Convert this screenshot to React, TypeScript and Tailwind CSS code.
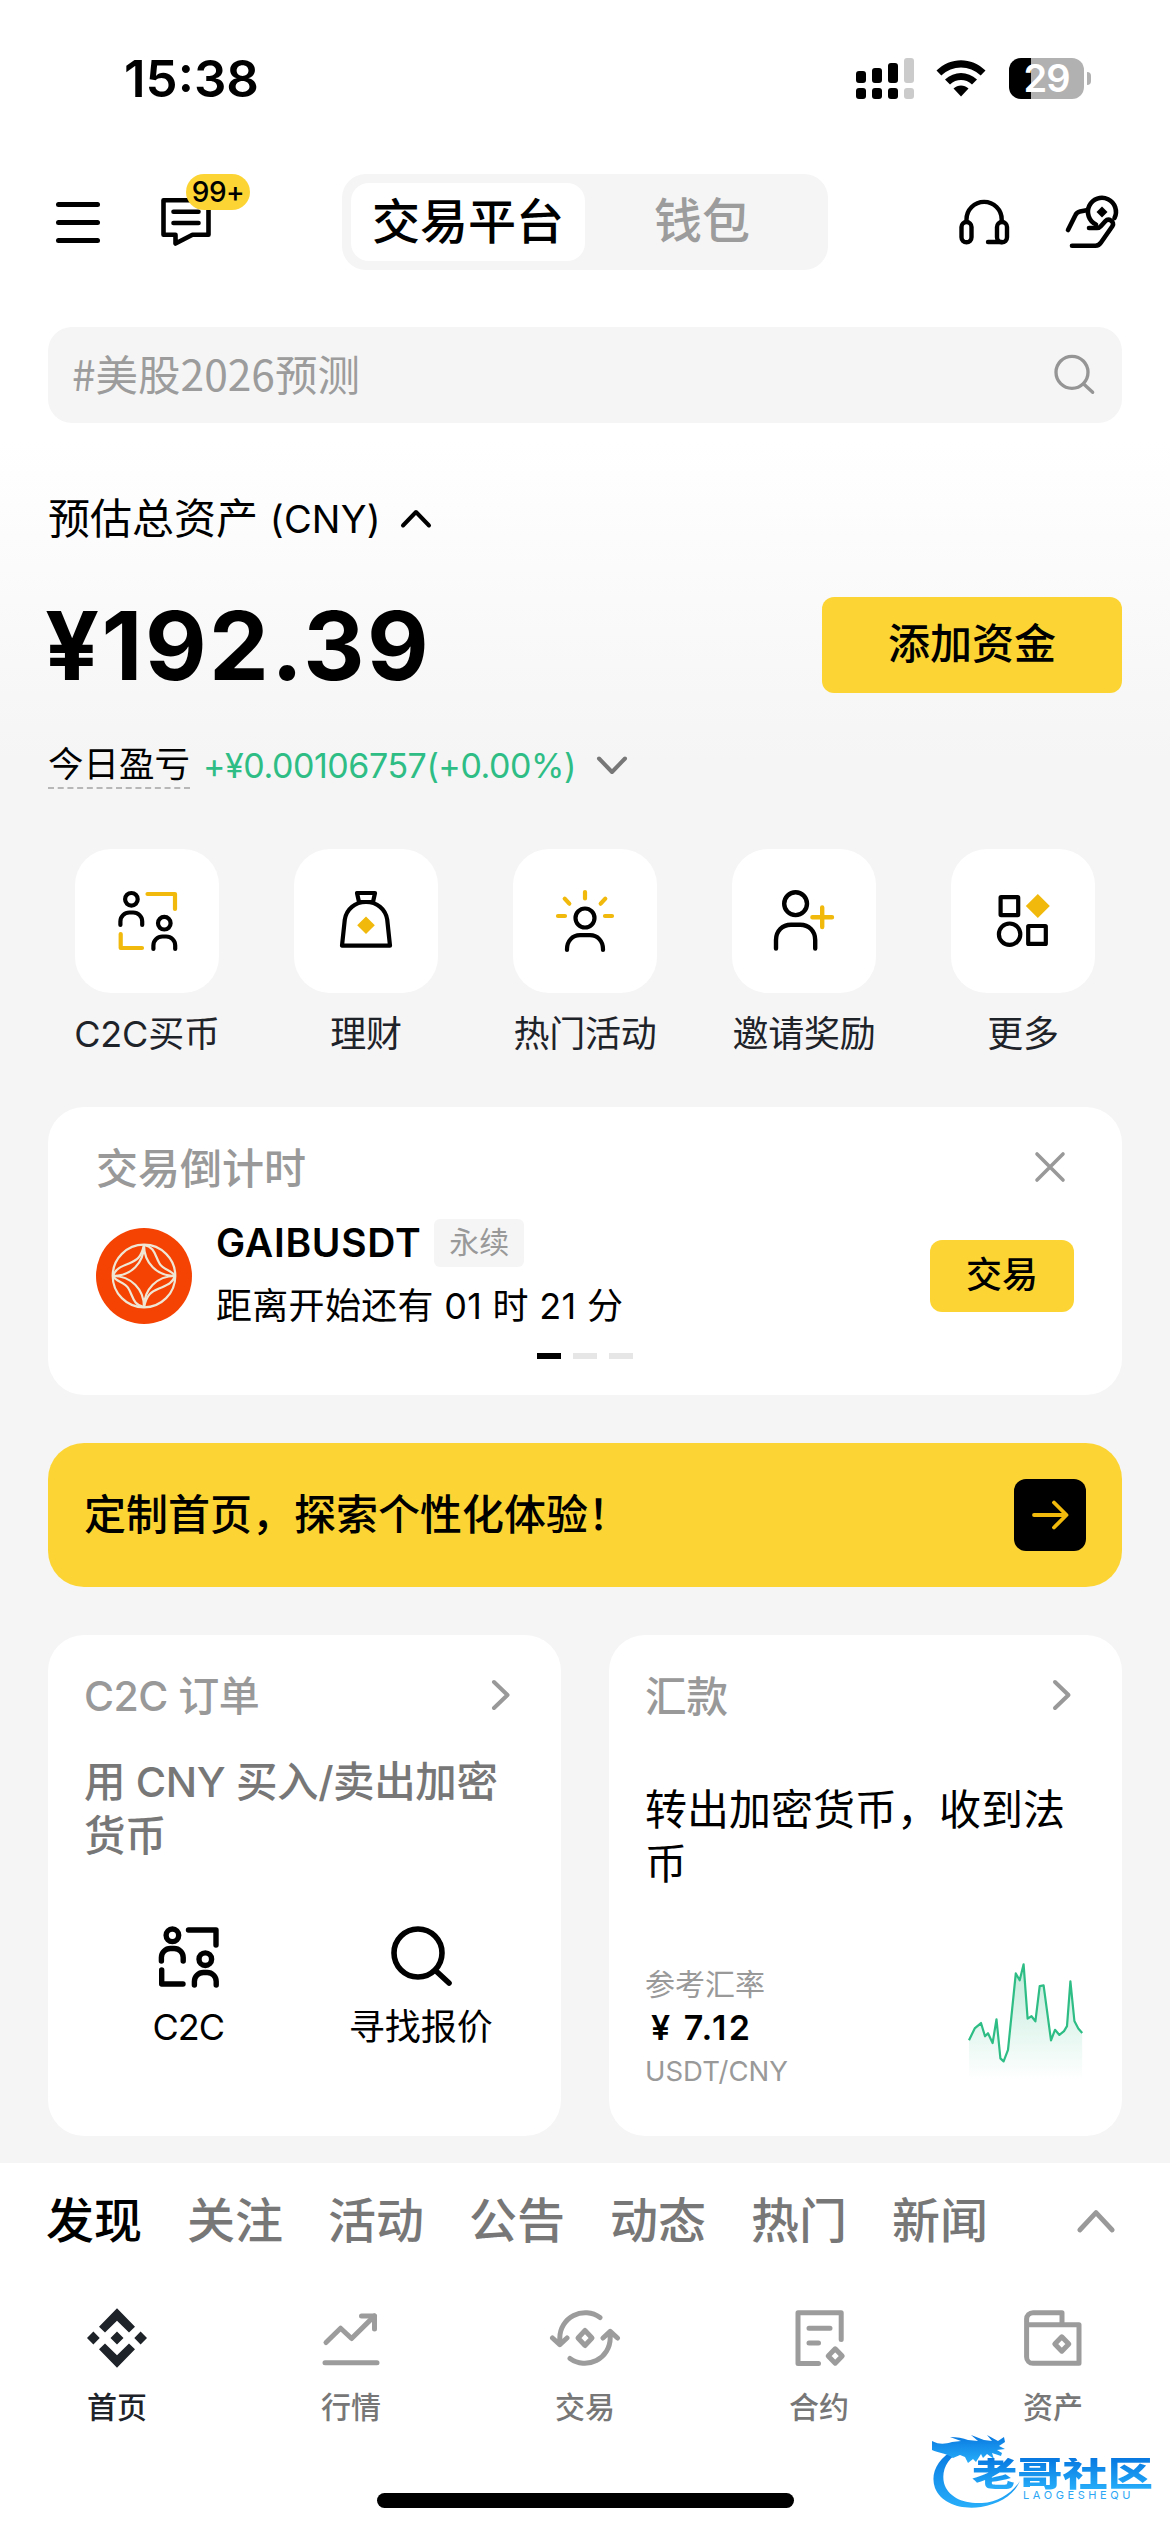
import type { ReactNode } from 'react';

interface IconProps {
  className?: string;
}

const quickActions: { label: string; icon: ReactNode }[] = [
  { label: 'C2C买币', icon: <C2CIcon className="w-[72px] h-[72px] stroke-[4.2]" accent="#f0b90b" /> },
  { label: '理财', icon: <EarnIcon /> },
  { label: '热门活动', icon: <CampaignIcon /> },
  { label: '邀请奖励', icon: <InviteIcon /> },
  { label: '更多', icon: <MoreIcon /> }
];

const feedTabs = ['发现', '关注', '活动', '公告', '动态', '热门', '新闻'];

const navItems: { label: string; icon: ReactNode }[] = [
  { label: '首页', icon: <HomeIcon /> },
  { label: '行情', icon: <MarketsIcon /> },
  { label: '交易', icon: <TradeIcon /> },
  { label: '合约', icon: <FuturesIcon /> },
  { label: '资产', icon: <WalletIcon /> }
];

const ratePoints = [
  [0, 76], [5.7, 64.3], [12, 59], [16, 72], [19, 69], [23.6, 78.7], [27.5, 55.3], [31.4, 93.7], [34.6, 96.7],
  [39, 85.3], [46.8, 10.3], [50.7, 17], [54.6, 1.3], [58.6, 54.7], [62.5, 52.3], [66.4, 57.3], [70.7, 22.7],
  [74.6, 22], [82, 76], [86, 65.7], [90.4, 70.7], [95, 67], [98, 62], [101.4, 18], [105.4, 57], [109.3, 64.3],
  [113.2, 68.7]
];

function C2CIcon({ className = '', accent = '#000' }: IconProps & { accent?: string }) {
  return (
    <svg viewBox="36 36 72 72" fill="none" stroke="#000" strokeLinecap="round" strokeLinejoin="round" className={className}>
      <circle cx="56.4" cy="50.3" r="6.3" />
      <path d="M45.4 76v-3.5a9 9 0 0 1 9-9h3.8a9 9 0 0 1 9 9V76" />
      <circle cx="89.3" cy="74.2" r="6.3" />
      <path d="M78.4 100v-3.5a9 9 0 0 1 9-9h3.8a9 9 0 0 1 9 9v3.5" />
      <path d="M72.5 45H100v15M45.7 85v14H67" stroke={accent} />
    </svg>
  );
}

function EarnIcon() {
  return (
    <svg viewBox="36 36 72 72" fill="none" stroke="#000" strokeWidth="4.2" strokeLinejoin="round" className="w-[72px] h-[72px]">
      <path d="M63 44h18l-2 9H65z" />
      <path d="M72 53c-11 0-19.5 7-21.2 17.5L48 96.7h48l-2.8-26.2C91.5 60 83 53 72 53z" />
      <path d="M72 67.5l8.8 8.8-8.8 8.8-8.8-8.8z" fill="#f0b90b" stroke="none" />
    </svg>
  );
}

function CampaignIcon() {
  return (
    <svg viewBox="36 36 72 72" fill="none" stroke="#000" strokeWidth="4.2" strokeLinecap="round" className="w-[72px] h-[72px]">
      <circle cx="72" cy="69" r="9.5" />
      <path d="M54 101v-1c0-8 5.5-13.8 13-13.8h10c7.5 0 13 5.8 13 13.8v1" />
      <path d="M72 43v6.5M51.7 49.7l4.6 5M92.3 49.7l-4.6 5M45 67h7M92 67h7" stroke="#f0b90b" />
    </svg>
  );
}

function InviteIcon() {
  return (
    <svg viewBox="36 36 72 72" fill="none" stroke="#000" strokeWidth="4.4" strokeLinecap="round" className="w-[72px] h-[72px]">
      <circle cx="63.6" cy="54.7" r="11.4" />
      <path d="M44 99.5V91c0-9 6.3-15.3 15-15.3h9.2c8.7 0 15 6.3 15 15.3v8.5" />
      <path d="M90.2 58.5v19.6M80.4 68.3H100" stroke="#f0b90b" />
    </svg>
  );
}

function MoreIcon() {
  return (
    <svg viewBox="36 36 72 72" fill="none" stroke="#000" strokeWidth="4.2" strokeLinejoin="round" className="w-[72px] h-[72px]">
      <rect x="49.6" y="48.2" width="17.6" height="17.9" rx="0.5" />
      <rect x="77.2" y="77" width="17.6" height="17.9" rx="0.5" />
      <circle cx="58.6" cy="85.2" r="10.7" />
      <path d="M86.8 45l12 12-12 12-12-12z" fill="#f0b90b" stroke="none" />
    </svg>
  );
}

function MessageIcon() {
  return (
    <svg viewBox="0 0 72 72" fill="none" stroke="#000" strokeWidth="4.6" strokeLinecap="round" strokeLinejoin="round" className="w-[72px] h-[72px]">
      <path d="M13.5 14.2h45v34.6H42.5L25.5 57.5v-8.7h-12z" />
      <path d="M23.5 25.7h25M23.5 37h25" />
    </svg>
  );
}

function HeadsetIcon() {
  return (
    <svg viewBox="0 0 72 72" fill="none" stroke="#000" strokeWidth="4.4" strokeLinecap="round" className="w-[72px] h-[72px]">
      <path d="M18.5 35v-1.5a17.6 17.6 0 0 1 35.2 0V35" />
      <rect x="13.5" y="36" width="10" height="20.3" rx="5" />
      <rect x="49" y="36" width="10" height="20.3" rx="5" />
      <path d="M40 56h14" />
    </svg>
  );
}

function HandCoinIcon() {
  return (
    <svg viewBox="0 0 72 72" fill="none" stroke="#000" strokeWidth="4.6" strokeLinecap="round" strokeLinejoin="round" className="w-[72px] h-[72px]">
      <path d="M40 38.5A14 14 0 1 1 58.5 32" />
      <path d="M46 20.5l5.5 5.5-5.5 5.5-5.5-5.5z" fill="#000" stroke="none" />
      <path d="M12 44l7.5-15c1-2.2 2.5-3.2 4.5-3.6l6.5-1.2" />
      <path d="M33 42h8c2 0 3-.8 4-2l4.5-5c3-3.2 9.5.5 7 5L45 56.5c-1.5 2.4-3 3.2-5.5 3.2H16" />
    </svg>
  );
}

function SearchIcon({ className = '' }: IconProps) {
  return (
    <svg viewBox="0 0 72 72" fill="none" stroke="currentColor" strokeLinecap="round" className={className}>
      <circle cx="33" cy="32" r="24" />
      <path d="M50.5 49.5L64 62" />
    </svg>
  );
}

function HomeIcon() {
  return (
    <svg viewBox="0 0 72 72" fill="currentColor" className="w-[72px] h-[72px]">
      <path d="M36 6.3L54 24.7l-6 5.8-12-11.8-12 11.8-6-5.8z" />
      <path d="M36 65.7L18 47.3l6-5.8 12 11.8 12-11.8 6 5.8z" />
      <path d="M12.4 29.5l6.3 6.5-6.3 6.5L6 36zM59.6 29.5L66 36l-6.4 6.5-6.3-6.5zM36 29.5l6.5 6.5-6.5 6.5-6.5-6.5z" />
    </svg>
  );
}

function MarketsIcon() {
  return (
    <svg viewBox="0 0 72 72" fill="none" stroke="#9c9c9c" strokeWidth="5" strokeLinecap="round" strokeLinejoin="round" className="w-[72px] h-[72px]">
      <path d="M11 40.5l14.6-14.3 11 10.3L59.5 13.9" />
      <path d="M46.5 13.9h13V27M10 60.7h52" />
    </svg>
  );
}

function TradeIcon() {
  return (
    <svg viewBox="0 0 72 72" fill="none" stroke="#9c9c9c" strokeWidth="5" strokeLinecap="round" strokeLinejoin="round" className="w-[72px] h-[72px]">
      <path d="M10.8 42.5V36A25.3 25.3 0 0 1 51 15.6M3.5 36l7.3 6.7L18 36" />
      <path d="M61.2 29.5V36A25.3 25.3 0 0 1 21 56.4M54 36l7.2-6.7 7.3 6.7" />
      <path d="M36 28.5l7 7.5-7 7.5-7-7.5z" />
    </svg>
  );
}

function FuturesIcon() {
  return (
    <svg viewBox="0 0 72 72" fill="none" stroke="#9c9c9c" strokeWidth="5" strokeLinecap="round" strokeLinejoin="round" className="w-[72px] h-[72px]">
      <path d="M58.2 37.5V10.7H15v50.8h20.5" />
      <path d="M26 26.3h21M26 41h9.5" />
      <path d="M52.2 46.8l7 7.2-7 7.2-7-7.2z" />
    </svg>
  );
}

function WalletIcon() {
  return (
    <svg viewBox="0 0 72 72" fill="none" stroke="#9c9c9c" strokeWidth="5" strokeLinecap="round" strokeLinejoin="round" className="w-[72px] h-[72px]">
      <path d="M9.6 22.7H62v38.6H16a6.4 6.4 0 0 1-6.4-6.4V17.1a6.4 6.4 0 0 1 6.4-6.4h29v12" />
      <path d="M44.8 34.8l7 7.2-7 7.2-7-7.2z" />
    </svg>
  );
}

function GaibLogo() {
  return (
    <svg viewBox="0 0 96 96" fill="none" stroke="#efe6d3" strokeWidth="2.2" className="w-24 h-24 shrink-0">
      <circle cx="48" cy="48" r="48" fill="#f54304" stroke="none" />
      <circle cx="48" cy="48" r="31.3" />
      <path d="M48 17c0 18-13 31-31 31 18 0 31 13 31 31 0-18 13-31 31-31-18 0-31-13-31-31z" />
      <path d="M48 17c-3 13-7 15-15 18.5C25 39 20 40 17 48M48 17c11 2 11 11 15.5 18.5C67 42 76 42 79 48" />
      <path d="M48 79c3-13 7-15 15-18.5C71 57 76 56 79 48M48 79c-11-2-11-11-15.5-18.5C29 54 20 54 17 48" />
    </svg>
  );
}

function Chevron({ d, className = '' }: { d: string; className?: string }) {
  return (
    <svg viewBox="0 0 40 40" fill="none" stroke="currentColor" strokeLinecap="round" strokeLinejoin="round" className={className}>
      <path d={d} />
    </svg>
  );
}

function StatusBar() {
  return (
    <div className="h-[156px] flex items-center justify-between pl-[124px] pr-[79px]">
      <span className="text-[51px] font-semibold leading-none">15:38</span>
      <div className="flex items-center">
        <svg viewBox="0 0 58 41" className="w-[58px] h-[41px]">
          <path d="M3 13h4a3 3 0 0 1 3 3v6a3 3 0 0 1-3 3H3a3 3 0 0 1-3-3v-6a3 3 0 0 1 3-3zM19 10h4a3 3 0 0 1 3 3v9a3 3 0 0 1-3 3h-4a3 3 0 0 1-3-3v-9a3 3 0 0 1 3-3zM35 5h4a3 3 0 0 1 3 3v14a3 3 0 0 1-3 3h-4a3 3 0 0 1-3-3V8a3 3 0 0 1 3-3z" />
          <rect x="0" y="30" width="10" height="11" rx="3" />
          <rect x="16" y="30" width="10" height="11" rx="3" />
          <rect x="32" y="30" width="10" height="11" rx="3" />
          <rect x="48" y="0" width="10" height="25" rx="3" fill="#cbcbcb" />
          <rect x="48" y="30" width="10" height="11" rx="3" fill="#cbcbcb" />
        </svg>
        <svg viewBox="0 0 50 37" className="w-[50px] h-[37px] ml-[22px]">
          <path d="M0.5 10.5C14.5-3.3 35.5-3.3 49.5 10.5l-4.8 5C33.5 4.8 16.5 4.8 5.3 15.5z" />
          <path d="M9 19.5c9.2-8.8 22.8-8.8 32 0l-5 5c-6.3-5.9-15.7-5.9-22 0z" />
          <path d="M17.5 28.5c4.3-3.9 10.7-3.9 15 0L25 36.5z" />
        </svg>
        <div className="ml-[23px] w-[75px] h-[41px] rounded-[12px] bg-[linear-gradient(90deg,#000_30%,#b1b1b1_30%)] text-white text-[38px] font-semibold leading-[41px] text-center tracking-[-1px]">
          29
        </div>
        <div className="ml-[3px] w-1 h-[13px] rounded-r-full bg-[#b1b1b1]" />
      </div>
    </div>
  );
}

function Header() {
  return (
    <div className="mt-[18px] h-24 flex items-center pl-14 pr-[42px]">
      <div className="flex items-center w-[286px]">
        <div className="w-11 flex flex-col gap-[13px]">
          <div className="h-[5px] rounded-full bg-black" />
          <div className="h-[5px] rounded-full bg-black" />
          <div className="h-[5px] rounded-full bg-black" />
        </div>
        <div className="relative ml-[50px]">
          <MessageIcon />
          <span className="absolute left-9 -top-3 w-16 h-9 rounded-full bg-[#fcd535] text-[28px] font-medium leading-9 text-center tracking-[-0.5px]">99+</span>
        </div>
      </div>
      <div className="w-[486px] h-24 rounded-[24px] bg-[#f5f5f5] p-[9px] flex text-[48px] font-medium">
        <div className="w-[234px] rounded-[18px] bg-white flex items-center justify-center leading-none">交易平台</div>
        <div className="flex-1 flex items-center justify-center leading-none pb-0.5 text-[#9c9c9c]">钱包</div>
      </div>
      <div className="flex gap-9 ml-auto">
        <HeadsetIcon />
        <HandCoinIcon />
      </div>
    </div>
  );
}

function Balance() {
  return (
    <div className="px-12 pt-[71px] bg-[linear-gradient(180deg,#fff_5%,#f5f5f5_92%)]">
      <div className="h-12 mt-[1px] flex items-center text-[42px] leading-none">
        预估总资产&nbsp;<span className="text-[38px] tracking-[0.2px]">(CNY)</span>
        <Chevron d="M7 26.5L20 13l13 13.5" className="ml-[15px] w-10 h-10 stroke-[4]" />
      </div>
      <div className="mt-[54px] flex items-center justify-between h-24">
        <span className="-ml-[3px] text-[95px] font-bold leading-none tracking-[2.4px]">¥192.39</span>
        <button className="w-[300px] h-24 rounded-[12px] bg-[#fcd535] text-[42px] font-medium leading-none pb-0.5">添加资金</button>
      </div>
      <div className="mt-12 h-12 flex items-center">
        <span className="h-12 text-[35.5px] leading-[47px] border-b-2 border-dashed border-[#b7b7b7]">今日盈亏</span>
        <span className="ml-[13px] pt-0.5 text-[34px] leading-none tracking-[-0.45px] text-[#2ebd85]">+¥0.00106757(+0.00%)</span>
        <Chevron d="M7 13.5L20 27l13-13.5" className="ml-4 w-10 h-10 stroke-[4] text-[#777]" />
      </div>
    </div>
  );
}

function CountdownCard() {
  return (
    <div className="mt-[49px] h-72 rounded-[36px] bg-white px-12 flex flex-col">
      <div className="mt-9 h-12 flex items-center justify-between text-[#999]">
        <span className="pt-[3px] text-[42px] font-medium leading-none">交易倒计时</span>
        <svg viewBox="0 0 48 48" fill="none" stroke="currentColor" strokeWidth="3.6" strokeLinecap="round" className="w-12 h-12">
          <path d="M11 11l26 26M37 11L11 37" />
        </svg>
      </div>
      <div className="mt-7 h-[114px] flex items-center">
        <GaibLogo />
        <div className="ml-6 flex-1">
          <div className="flex items-center h-12">
            <span className="pb-0.5 text-[39px] font-semibold leading-none tracking-[0.7px]">GAIBUSDT</span>
            <span className="ml-[13px] w-[90px] h-12 rounded-[6px] bg-[#f5f5f5] text-[30px] leading-[47px] text-center text-[#999]">永续</span>
          </div>
          <div className="mt-3.5 h-[52px] text-[36px] leading-[51px] tracking-[0.3px]">距离开始还有 01 时 21 分</div>
        </div>
        <button className="w-36 h-[72px] rounded-[12px] bg-[#fcd535] text-[36px] font-medium leading-none pb-0.5">交易</button>
      </div>
      <div className="mt-5 flex justify-center gap-3">
        <div className="w-6 h-1.5 bg-black" />
        <div className="w-6 h-1.5 bg-[#e6e6e6]" />
        <div className="w-6 h-1.5 bg-[#e6e6e6]" />
      </div>
    </div>
  );
}

function RateChart() {
  const line = ratePoints.map(([x, y], i) => `${i ? 'L' : 'M'}${x} ${y}`).join('');
  return (
    <svg viewBox="0 0 114 115" preserveAspectRatio="none" className="w-[114px] h-[117px] overflow-visible">
      <defs>
        <linearGradient id="rate-fill" x1="0" y1="0" x2="0" y2="1">
          <stop offset="0" stopColor="#2ebd85" stopOpacity="0.3" />
          <stop offset="1" stopColor="#2ebd85" stopOpacity="0" />
        </linearGradient>
      </defs>
      <path d={`${line}V115H0Z`} fill="url(#rate-fill)" />
      <path d={line} fill="none" stroke="#2ebd85" strokeWidth="2.2" strokeLinejoin="round" />
    </svg>
  );
}

function Cards() {
  return (
    <div className="mt-12 flex gap-12 h-[501px]">
      <div className="w-[513px] rounded-[36px] bg-white pt-9">
        <div className="pl-9 pr-10 h-12 flex items-center justify-between text-[#999]">
          <span className="pt-0.5 text-[41px] font-medium leading-none tracking-[-0.5px]">C2C 订单</span>
          <Chevron d="M13 7l13.5 13L13 33" className="w-10 h-10 stroke-[4]" />
        </div>
        <p className="mt-9 px-9 text-[41.5px] font-medium leading-[54px] tracking-[-0.4px] whitespace-nowrap text-[#777]">
          用 CNY 买入/卖出加密
          <br />
          货币
        </p>
        <div className="mt-[58px] px-6 flex text-[36px] leading-[48px] text-center">
          <div className="flex-1 flex flex-col items-center">
            <C2CIcon className="w-[72px] h-[72px] stroke-[5.4]" />
            <span className="mt-2.5 tracking-[-1px]">C2C</span>
          </div>
          <div className="flex-1 flex flex-col items-center">
            <SearchIcon className="w-[72px] h-[72px] stroke-[5.6]" />
            <span className="mt-2.5">寻找报价</span>
          </div>
        </div>
      </div>
      <div className="w-[513px] rounded-[36px] bg-white pt-9">
        <div className="pl-9 pr-10 h-12 flex items-center justify-between text-[#999]">
          <span className="pt-[3px] text-[41.5px] font-medium leading-[52px]">汇款</span>
          <Chevron d="M13 7l13.5 13L13 33" className="w-10 h-10 stroke-[4]" />
        </div>
        <p className="mt-16 px-9 text-[42px] leading-[54px]">
          转出加密货币，收到法
          <br />
          币
        </p>
        <div className="mt-[66px] px-9 flex justify-between">
          <div className="pt-[5px] text-[#999]">
            <div className="text-[30px] leading-[44px]">参考汇率</div>
            <div className="pl-1.5 h-[44px] text-[34px] font-semibold leading-[44px] tracking-[2.5px] text-black">¥ 7.12</div>
            <div className="h-10 text-[27.5px] leading-[43px]">USDT/CNY</div>
          </div>
          <div className="pr-[3px] pt-1.5">
            <RateChart />
          </div>
        </div>
      </div>
    </div>
  );
}

function Watermark() {
  return (
    <div className="absolute left-[931px] top-[2431px] w-[222px] h-[78px]">
      <svg viewBox="0 0 222 78" className="w-[222px] h-[78px]">
        <defs>
          <linearGradient id="mark" x1="0" y1="0" x2="0" y2="1">
            <stop offset="0" stopColor="#0878e0" />
            <stop offset="1" stopColor="#27aefa" />
          </linearGradient>
        </defs>
        <g fill="url(#mark)">
          <path d="M24 18C6 28-1 43 4 57c6 15 25 22 46 19 18-3 33-12 39-26-9 13-22 21-38 22-19 1-34-6-38-20C10 39 17 26 31 20z" />
          <path d="M1 10c8 4 13 3 20 1l9-1-11-4c7 0 13 1 18 3l10 1-7-6 13 5 8 1-5-6 11 6 6-4 1 5-6 4 6 3-8 1 5 3-1 3-9-3 2 6-7-5-4 4-2-4-5 8-3-3-5 4-3-6-5-2-7 3c-7-5-15-5-21-8z" />
        </g>
      </svg>
      <div className="absolute left-[41px] top-[27px] w-[136px] h-[32px] origin-left scale-x-[1.33] text-[34px] font-black leading-[32px] whitespace-nowrap text-transparent bg-clip-text bg-linear-to-b from-[#0878e0] to-[#27aefa]">
        老哥社区
      </div>
      <div className="absolute left-[92px] top-[60px] text-[11px] leading-[9px] tracking-[3.6px] text-[#2ba6f5]">LAOGESHEQU</div>
    </div>
  );
}

export default function App() {
  return (
    <div className="relative w-[1170px] h-[2532px] overflow-hidden bg-[#f5f5f5] text-black font-['Inter','Noto_Sans_CJK_SC',sans-serif]">
      <div className="bg-white">
        <StatusBar />
        <Header />
        <div className="pt-[57px] px-12">
          <div className="h-24 rounded-[24px] bg-[#f5f5f5] px-6 flex items-center justify-between text-[#9c9c9c]">
            <span className="text-[42.5px] leading-none pb-1 font-['Noto_Sans_CJK_SC',sans-serif]">#美股2026预测</span>
            <SearchIcon className="w-12 h-12 stroke-[5] text-[#959595]" />
          </div>
        </div>
      </div>

      <Balance />

      <div className="px-12">
        <div className="mt-[60px] -mx-[10px] flex justify-between">
          {quickActions.map(item => (
            <div key={item.label} className="w-[218px] flex flex-col items-center">
              <div className="w-36 h-36 rounded-[36px] bg-white flex items-center justify-center">{item.icon}</div>
              <span className="mt-[17px] h-12 text-[36px] leading-[48px] tracking-[-0.2px] text-[#1e2329] whitespace-nowrap">{item.label}</span>
            </div>
          ))}
        </div>

        <CountdownCard />

        {/* Homepage customization banner */}
        <div className="mt-12 h-36 rounded-[36px] bg-[#fcd535] px-9 flex items-center justify-between">
          <span className="text-[42px] font-medium leading-none">定制首页，探索个性化体验！</span>
          <div className="w-[72px] h-[72px] rounded-[12px] bg-black flex items-center justify-center">
            <svg viewBox="0 0 72 72" fill="none" stroke="#f0b90b" strokeWidth="3.8" strokeLinecap="round" strokeLinejoin="round" className="w-[72px] h-[72px]">
              <path d="M20 36h32M40 23.5L52.5 36 40 48.5" />
            </svg>
          </div>
        </div>

        <Cards />
      </div>

      {/* Bottom sheet tabs and navigation */}
      <div className="mt-[27px] h-[369px] bg-white">
        <div className="h-[116px] pl-[46px] pr-[50px] flex items-center justify-between">
          <div className="flex gap-[45px] text-[48px] font-medium leading-none text-[#777]">
            {feedTabs.map((tab, i) => (
              <span key={tab} className={i === 0 ? 'text-black' : ''}>{tab}</span>
            ))}
          </div>
          <Chevron d="M6.5 27.5L20 13l13.5 14.5" className="w-12 h-12 stroke-[4] text-[#999]" />
        </div>
        <div className="pt-[23px] flex">
          {navItems.map((item, i) => (
            <div key={item.label} className={`w-[234px] flex flex-col items-center ${i === 0 ? 'text-[#1e2329]' : 'text-[#777]'}`}>
              {item.icon}
              <span className="mt-[15px] text-[30px] font-medium leading-9">{item.label}</span>
            </div>
          ))}
        </div>
        <div className="mt-[68px] mx-auto w-[417px] h-[15px] rounded-full bg-black" />
      </div>

      <Watermark />
    </div>
  );
}
